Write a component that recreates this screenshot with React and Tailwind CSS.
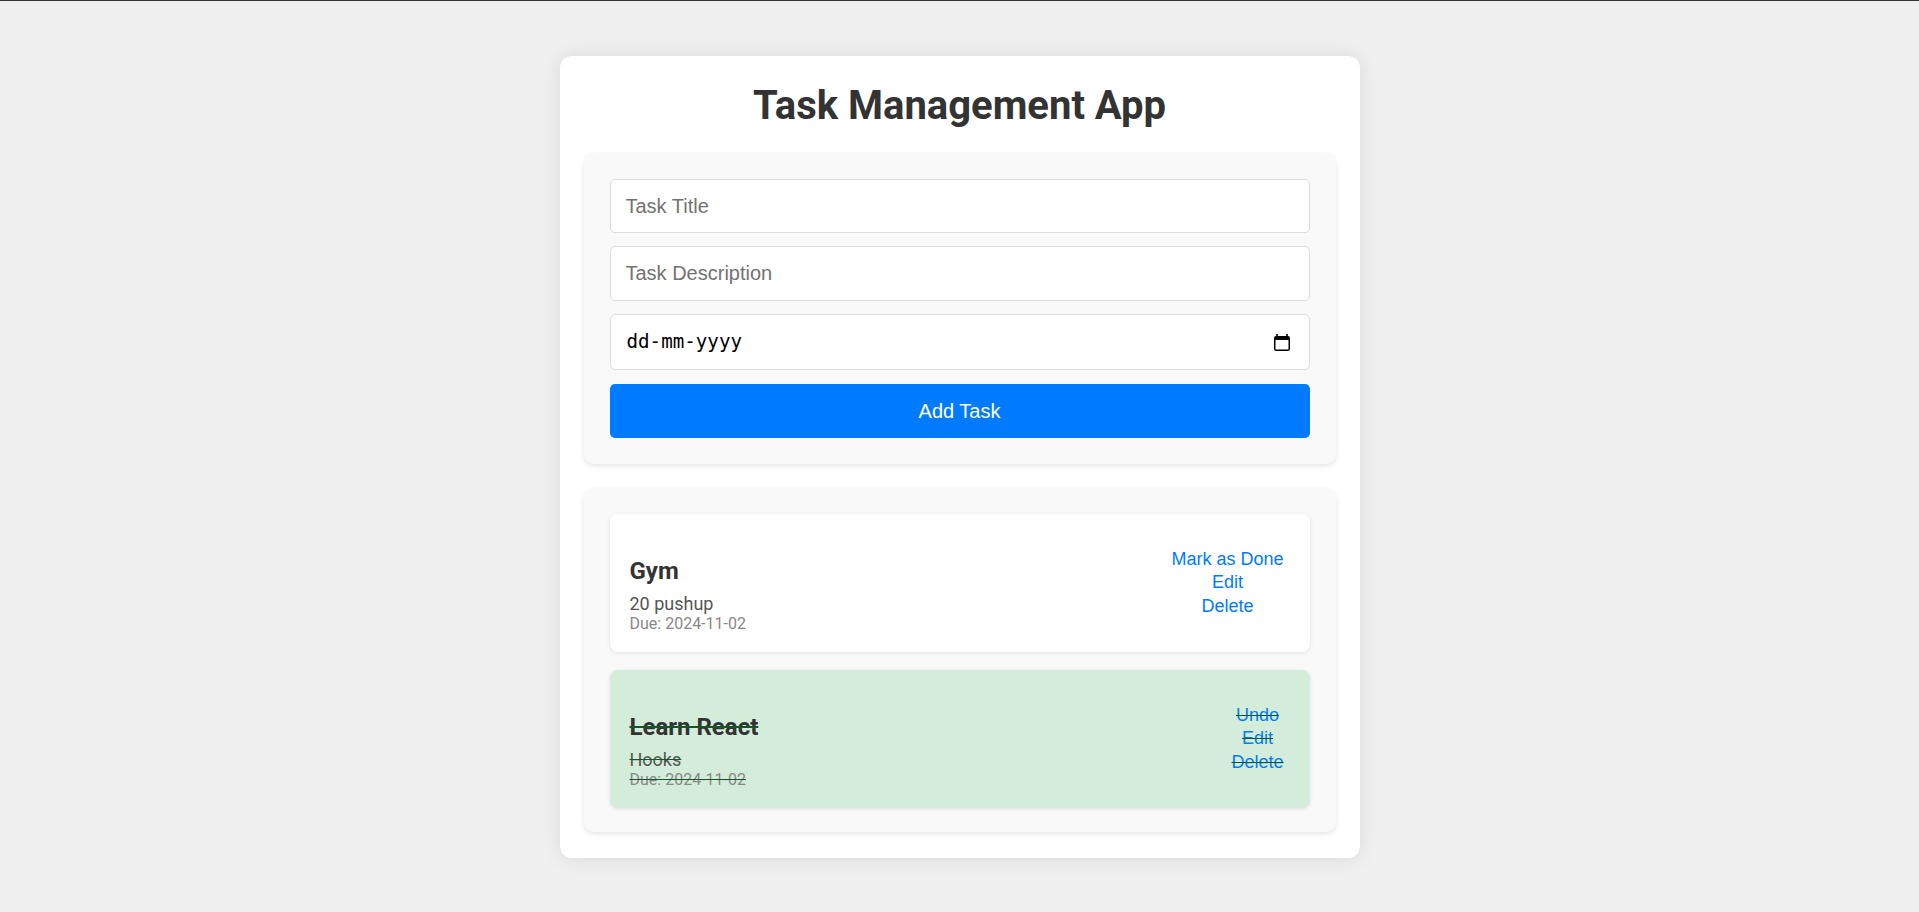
import React from "react";

function CalendarIcon() {
  return (
    <svg width="16" height="17" viewBox="0 0 16 17" className="shrink-0">
      <rect x="2.2" y="0" width="1.6" height="3.5" fill="#000" />
      <rect x="12.2" y="0" width="1.6" height="3.5" fill="#000" />
      <rect x="0.75" y="2.75" width="14.5" height="13.5" rx="1.6" fill="none" stroke="#000" strokeWidth="1.5" />
      <rect x="0.75" y="2.75" width="14.5" height="3.2" fill="#000" />
    </svg>
  );
}

function TaskCard({ title, desc, due, done }) {
  return (
    <div
      className={
        done
          ? "flex items-center justify-between rounded-[8px] bg-[#d4edda] text-[#155724] line-through px-[20px] py-[19px] shadow-[0_1px_4px_rgba(0,0,0,0.1)]"
          : "flex items-center justify-between rounded-[8px] bg-white px-[20px] py-[19px] shadow-[0_1px_4px_rgba(0,0,0,0.1)]"
      }
    >
      <div className="flex flex-col pt-[24px] font-['Roboto',sans-serif]">
        <h3 className="text-[24px] leading-[28px] font-bold text-[#333]">{title}</h3>
        <p className="mt-[8px] text-[18px] leading-[21px] text-[#555]">{desc}</p>
        <p className="text-[16px] leading-[19px] text-[#888]">{due}</p>
      </div>
      <div className="flex flex-col items-center font-['Liberation_Sans',Arial,sans-serif]">
        <span className="block px-[6px] text-[18px] leading-[23.33px] text-[#007bff] cursor-pointer">
          {done ? "Undo" : "Mark as Done"}
        </span>
        <span className="block px-[6px] text-[18px] leading-[23.33px] text-[#007bff] cursor-pointer">Edit</span>
        <span className="block px-[6px] text-[18px] leading-[23.33px] text-[#007bff] cursor-pointer">Delete</span>
      </div>
    </div>
  );
}

export default function App() {
  return (
    <div className="min-h-screen bg-[#f0f0f0] border-t border-[#333] pt-[55px] pb-[40px]">
      <div className="mx-auto w-[800px] bg-white rounded-[12px] shadow-[0_0_20px_rgba(0,0,0,0.1)] px-[24px] pt-[26px] pb-[26px]">
        <h1 className="text-center font-['Roboto',sans-serif] font-bold text-[40px] leading-[47px] text-[#333] mb-[24px]">
          Task Management App
        </h1>

        <div className="flex flex-col rounded-[10px] bg-[#f9f9f9] p-[26px] shadow-[0_2px_5px_rgba(0,0,0,0.1)] font-['Liberation_Sans',Arial,sans-serif]">
          <input
            type="text"
            placeholder="Task Title"
            className="h-[54px] w-full rounded-[5px] border border-[#ddd] bg-white px-[15px] text-[20px] text-[#333] placeholder:text-[#727272] outline-none"
          />
          <input
            type="text"
            placeholder="Task Description"
            className="mt-[13px] h-[55px] w-full rounded-[5px] border border-[#ddd] bg-white px-[15px] text-[20px] text-[#333] placeholder:text-[#727272] outline-none"
          />
          <div className="mt-[13px] flex h-[56px] w-full items-center rounded-[5px] border border-[#ddd] bg-white pl-[16px] pr-[19px]">
            <input
              type="text"
              placeholder="dd-mm-yyyy"
              className="min-w-0 flex-1 bg-transparent font-['DejaVu_Sans_Mono',monospace] text-[19.2px] text-black placeholder:text-black outline-none"
            />
            <CalendarIcon />
          </div>
          <button className="mt-[14px] h-[54px] w-full rounded-[5px] bg-[#007bff] text-[20px] text-white">
            Add Task
          </button>
        </div>

        <div className="mt-[24px] flex flex-col gap-[18px] rounded-[10px] bg-[#f9f9f9] px-[26px] pt-[26px] pb-[24px] shadow-[0_2px_5px_rgba(0,0,0,0.1)]">
          <TaskCard title="Gym" desc="20 pushup" due="Due: 2024-11-02" done={false} />
          <TaskCard title="Learn React" desc="Hooks" due="Due: 2024-11-02" done={true} />
        </div>
      </div>
    </div>
  );
}
